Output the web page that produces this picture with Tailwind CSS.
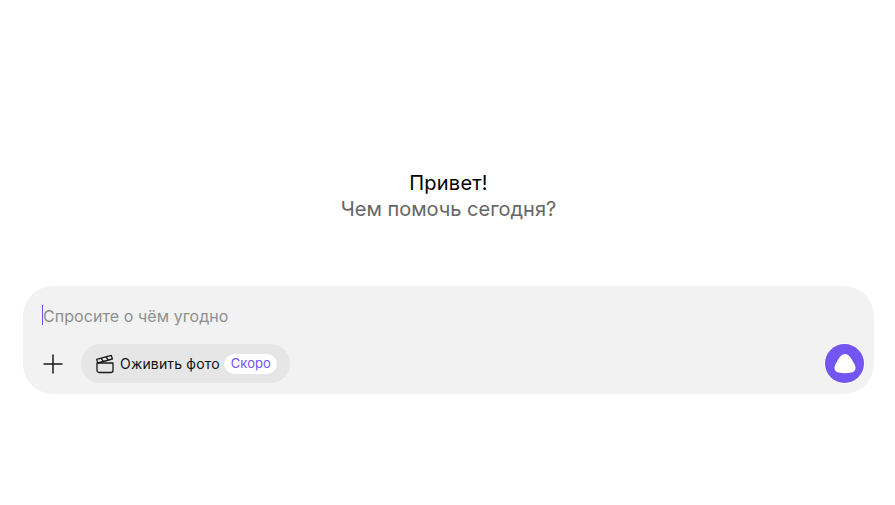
<!DOCTYPE html>
<html lang="ru">
<head>
  <meta charset="UTF-8">
  <title>Алиса</title>
  <script src="https://cdn.jsdelivr.net/npm/@tailwindcss/browser@4"></script>
</head>
<body class="bg-white font-['Inter',sans-serif]">
  <main class="w-[895px] h-[505px] overflow-hidden flex flex-col">
    <!-- Greeting -->
    <div class="pt-[170px] h-[286px] pl-[2px] text-center text-[20px] leading-[26px]">
      <p class="text-black tracking-[0.25px]">Привет!</p>
      <p class="text-[#666666]">Чем помочь сегодня?</p>
    </div>

    <!-- Input box -->
    <div class="ml-[23px] w-[851px] h-[108px] bg-[#f2f2f2] rounded-[30px] pl-[19px] pr-[10px]">
      <div class="h-[58px] pt-[19px] flex items-start">
        <span class="w-px h-[20px] bg-[#6f52ee]"></span>
        <span class="text-[16px] leading-[20px] pt-px tracking-[0.07px] text-[#8f8f8f]">Спросите о чём угодно</span>
      </div>
      <div class="flex items-center justify-between">
        <div class="flex items-center gap-[17px]">
          <svg class="w-[22px] h-[22px]" viewBox="0 0 22 22" fill="none" stroke="#1a1a1a" stroke-width="1.5">
            <path d="M11 1.500v19M1.500 11h19"></path>
          </svg>
          <div class="h-[39px] bg-[#e6e6e6] rounded-full pl-[14px] pr-[13px] flex items-center">
            <svg class="w-[20px] h-[20px]" viewBox="0 0 20 20" fill="none" stroke="#1a1a1a" stroke-width="1.3" stroke-linejoin="round">
              <path d="M2 9h16v7.500a2 2 0 0 1-2 2H4a2 2 0 0 1-2-2z"></path>
              <path d="M1.700 5.400l14.600-4 1.100 3.600L2.800 9z"></path>
              <path d="M6 4.300l2.600 3.300M11 3l2.600 3.200"></path>
            </svg>
            <span class="ml-[5px] text-[14px] tracking-[0.17px] leading-[20px] pt-px text-[#111111]">Оживить фото</span>
            <span class="ml-[4px] h-[20px] pl-[7px] pr-[6px] bg-white rounded-full flex items-center text-[13px] tracking-[0.05px] text-[#6f52ee]">Скоро</span>
          </div>
        </div>
        <div class="w-[39px] h-[39px] rounded-full bg-[#7356ef] ring-1 ring-white/60 flex items-center justify-center">
          <svg class="w-[22px] h-[21px]" viewBox="0 0 24 22" fill="#ffffff">
            <path d="M12 .5c3.400 0 5.600 2.600 7.600 6.400 1.800 3.400 3.900 6.200 3.900 9 0 3.800-3.400 5.600-11.500 5.600S.5 19.700.5 15.900c0-2.800 2.100-5.600 3.900-9C6.400 3.100 8.600.5 12 .5z"></path>
          </svg>
        </div>
      </div>
    </div>
  </main>
</body>
</html>
